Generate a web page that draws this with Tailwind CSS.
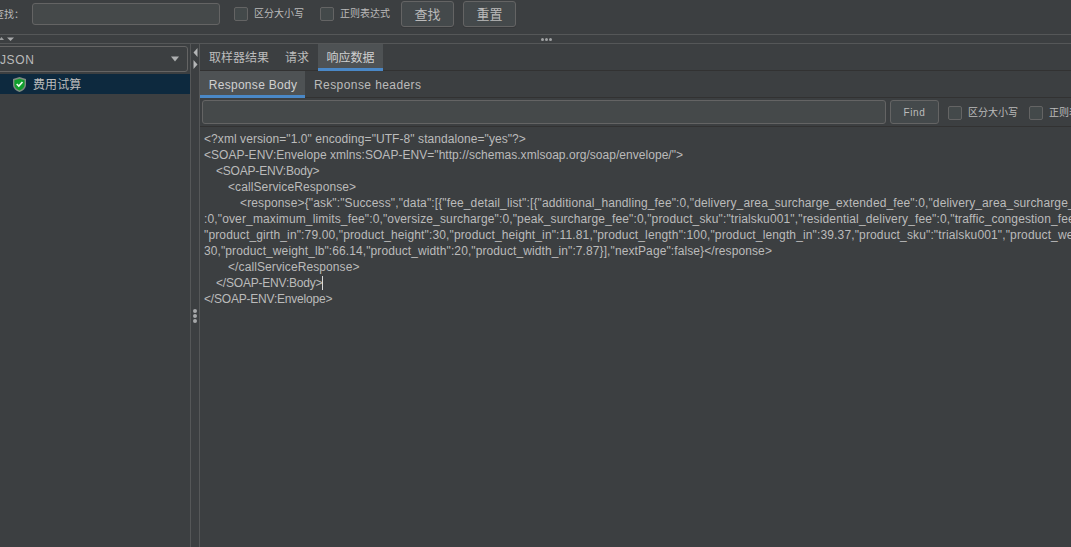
<!doctype html>
<html>
<head>
<meta charset="utf-8">
<script src="https://cdn.jsdelivr.net/npm/@tailwindcss/browser@4"></script>
</head>
<body class="m-0 overflow-hidden bg-[#3c3f41]">
<div class="w-[1071px] h-[547px] flex flex-col overflow-hidden bg-[#3c3f41] text-[#bbbbbb] font-['Liberation_Sans','Noto_Sans_CJK_SC',sans-serif]">
  <!-- search bar -->
  <div class="h-[35px] shrink-0 flex items-start border-b border-[#555758]">
    <div class="w-[32px] h-[28px] overflow-hidden flex items-center justify-end pr-[8px] text-[10px] whitespace-nowrap"><span class="shrink-0">查找：</span></div>
    <div class="w-[188px] h-[22px] mt-[3px] rounded-[3px] border border-[#646464] bg-[#45494a]"></div>
    <div class="w-[14px] h-[14px] mt-[7px] ml-[14px] rounded-[2px] border border-[#646464] bg-[#43494a]"></div>
    <span class="ml-[6px] mt-[8px] w-[50px] text-[10px] leading-[12px] whitespace-nowrap">区分大小写</span>
    <div class="w-[14px] h-[14px] mt-[7px] ml-[16px] rounded-[2px] border border-[#646464] bg-[#43494a]"></div>
    <span class="ml-[6px] mt-[8px] w-[50px] text-[10px] leading-[12px] whitespace-nowrap">正则表达式</span>
    <button class="ml-[11px] mt-[1px] w-[53px] h-[26px] rounded-[3px] border border-[#646464] bg-[#44494b] text-[13px] leading-none text-[#bbbbbb] shadow-[0_1px_0_#36383a]">查找</button>
    <button class="ml-[9px] mt-[1px] w-[53px] h-[26px] rounded-[3px] border border-[#646464] bg-[#44494b] text-[13px] leading-none text-[#bbbbbb] shadow-[0_1px_0_#36383a]">重置</button>
  </div>
  <!-- horizontal splitter -->
  <div class="h-[9px] shrink-0 flex items-center border-b border-[#555758] relative">
    <svg class="w-[16px] h-[6px] shrink-0" viewBox="0 0 16 6"><path d="M-1 4 L1.500 1 L4 4Z" fill="#9a9c9d"/><path d="M7 1.500 H14 L10.500 5Z" fill="#a8aaab"/></svg>
    <div class="ml-[525px] flex gap-[1px]">
      <span class="w-[3px] h-[3px] rounded-full bg-[#9fa1a2]"></span>
      <span class="w-[3px] h-[3px] rounded-full bg-[#9fa1a2]"></span>
      <span class="w-[3px] h-[3px] rounded-full bg-[#9fa1a2]"></span>
    </div>
  </div>
  <div class="flex-1 flex min-h-0">
    <!-- tree panel -->
    <div class="w-[190px] shrink-0 pt-[2px] overflow-hidden">
      <div class="w-[193px] h-[26px] -ml-[5px] rounded-[3px] border border-[#646464] bg-[#3c3f41] flex items-center justify-between pl-[4px] pr-[7px]">
        <span class="text-[12px] tracking-[0.6px] pt-[2px]">JSON</span>
        <svg class="w-[10px] h-[6px]" viewBox="0 0 10 6"><path d="M1 0.500 H9 L5 5.500Z" fill="#aeb0b1"/></svg>
      </div>
      <div class="mt-[2px] h-[20px] bg-[#0d293e] flex items-center pl-[13px]">
        <svg class="w-[13px] h-[15px] shrink-0 mt-[1px]" viewBox="0 0 13 15">
          <path d="M6.500 0 L13 2 V7.500 C13 11.500 9.800 14 6.500 15 C3.200 14 0 11.500 0 7.500 V2Z" fill="#7d8a80"/>
          <path d="M6.500 1.800 L11.600 3.300 V7.500 C11.600 10.600 9.200 12.600 6.500 13.500 C3.800 12.600 1.400 10.600 1.400 7.500 V3.300Z" fill="#0f9e2c"/>
          <path d="M3.700 7 L5.800 9.100 L9.500 5" fill="none" stroke="#f2fff2" stroke-width="1.600"/>
        </svg>
        <span class="ml-[7px] pt-[2px] text-[12px] tracking-[0.1px] leading-none text-[#bcbcbc]">费用试算</span>
      </div>
    </div>
    <!-- vertical splitter -->
    <div class="w-[10px] shrink-0 border-x border-[#555758] flex flex-col items-center">
      <svg class="w-[5px] h-[9px] mt-[4px]" viewBox="0 0 5 9"><path d="M4.500 0 V9 L0.500 4.500Z" fill="#b4b6b7"/></svg>
      <svg class="w-[5px] h-[9px] mt-[3px]" viewBox="0 0 5 9"><path d="M0.500 0 V9 L4.500 4.500Z" fill="#b4b6b7"/></svg>
      <div class="mt-[240px] flex flex-col gap-[1px]">
        <span class="w-[4px] h-[4px] rounded-full bg-[#a5a7a8]"></span>
        <span class="w-[4px] h-[4px] rounded-full bg-[#a5a7a8]"></span>
        <span class="w-[4px] h-[4px] rounded-full bg-[#a5a7a8]"></span>
      </div>
    </div>
    <!-- results panel -->
    <div class="flex-1 min-w-0 flex flex-col overflow-hidden">
      <div class="h-[27px] shrink-0 flex border-b border-[#323232] text-[12px]">
        <div class="w-[85px] shrink-0 flex items-center pl-[9px] pt-[1px]">取样器结果</div>
        <div class="w-[33px] shrink-0 flex items-center pt-[1px]">请求</div>
        <div class="w-[65px] shrink-0 -mb-[1px] flex items-center justify-center bg-[#4e5254] border-b-[3px] border-[#4a88c7] text-[#d0d0d0] pt-[3px]">响应数据</div>
      </div>
      <div class="h-[27px] shrink-0 flex border-b border-[#323232] text-[12px]">
        <div class="w-[105px] shrink-0 -mb-[1px] flex items-center justify-center bg-[#4e5254] border-b-[3px] border-[#4a88c7] text-[#d0d0d0] tracking-[0.3px] pt-[3px] pl-[1px]">Response Body</div>
        <div class="flex items-center pl-[9px] pt-[1px] whitespace-nowrap tracking-[0.42px]">Response headers</div>
      </div>
      <div class="h-[29px] shrink-0 flex items-start border-b border-[#323232] pl-[2px]">
        <div class="w-[684px] shrink-0 h-[24px] mt-[2px] rounded-[3px] border border-[#646464] bg-[#45494a]"></div>
        <button class="ml-[4px] w-[49px] shrink-0 h-[24px] mt-[2px] rounded-[3px] border border-[#646464] bg-[#44494b] text-[10px] tracking-[0.6px] text-[#bbbbbb]">Find</button>
        <div class="w-[14px] h-[14px] shrink-0 mt-[8px] ml-[9px] rounded-[2px] border border-[#646464] bg-[#43494a]"></div>
        <span class="ml-[6px] mt-[9px] w-[50px] shrink-0 text-[10px] leading-[12px] whitespace-nowrap">区分大小写</span>
        <div class="w-[14px] h-[14px] shrink-0 mt-[8px] ml-[11px] rounded-[2px] border border-[#646464] bg-[#43494a]"></div>
        <span class="ml-[6px] mt-[9px] w-[50px] shrink-0 text-[10px] leading-[12px] whitespace-nowrap">正则表达式</span>
      </div>
      <div class="pl-[4px] pt-[4px] text-[12px] leading-[16px] whitespace-nowrap text-[#bbbbbb]">
        <div class="tracking-[0.07px]">&lt;?xml version="1.0" encoding="UTF-8" standalone="yes"?&gt;</div>
        <div class="tracking-[0.04px]">&lt;SOAP-ENV:Envelope xmlns:SOAP-ENV="http://schemas.xmlsoap.org/soap/envelope/"&gt;</div>
        <div class="pl-[12px] tracking-[-0.2px]">&lt;SOAP-ENV:Body&gt;</div>
        <div class="pl-[24px] tracking-[0.1px]">&lt;callServiceResponse&gt;</div>
        <div class="pl-[36px] tracking-[0.13px]">&lt;response&gt;{"ask":"Success","data":[{"fee_detail_list":[{"additional_handling_fee":0,"delivery_area_surcharge_extended_fee":0,"delivery_area_surcharge_</div>
        <div class="tracking-[0.14px]">:0,"over_maximum_limits_fee":0,"oversize_surcharge":0,"peak_surcharge_fee":0,"product_sku":"trialsku001","residential_delivery_fee":0,"traffic_congestion_fee</div>
        <div class="tracking-[0.14px]">"product_girth_in":79.00,"product_height":30,"product_height_in":11.81,"product_length":100,"product_length_in":39.37,"product_sku":"trialsku001","product_we</div>
        <div class="tracking-[0.1px]">30,"product_weight_lb":66.14,"product_width":20,"product_width_in":7.87}],"nextPage":false}&lt;/response&gt;</div>
        <div class="pl-[24px] tracking-[0.1px]">&lt;/callServiceResponse&gt;</div>
        <div class="pl-[12px] flex tracking-[-0.2px]"><span>&lt;/SOAP-ENV:Body&gt;</span><span class="w-[1px] h-[14px] mt-[1px] bg-[#d8d8d8]"></span></div>
        <div class="tracking-[-0.2px]">&lt;/SOAP-ENV:Envelope&gt;</div>
      </div>
    </div>
  </div>
</div>
</body>
</html>
